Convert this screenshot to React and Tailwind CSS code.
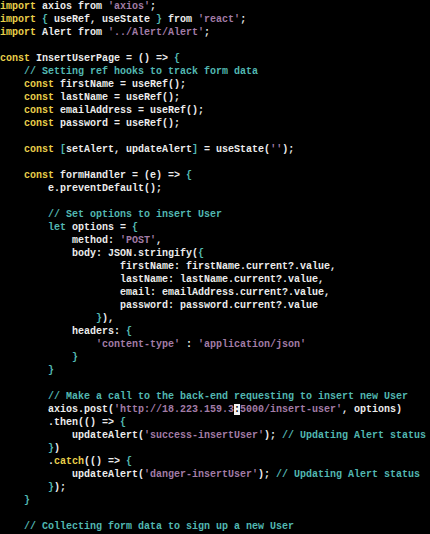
const Y = "text-[#e8cf4a]";
const T = "text-[#52b8b2]";
const S = "text-[#a27ca6]";
const W = "text-[#ececec]";

const lines = [
  [["import", Y], [" axios from ", W], ["'axios'", S], [";", W]],
  [["import", Y], [" ", W], ["{", T], [" useRef, useState ", W], ["}", T], [" from ", W], ["'react'", S], [";", W]],
  [["import", Y], [" Alert from ", W], ["'../Alert/Alert'", S], [";", W]],
  [],
  [["const", Y], [" InsertUserPage = () => ", W], ["{", T]],
  [["    // Setting ref hooks to track form data", T]],
  [["    ", W], ["const", Y], [" firstName = useRef();", W]],
  [["    ", W], ["const", Y], [" lastName = useRef();", W]],
  [["    ", W], ["const", Y], [" emailAddress = useRef();", W]],
  [["    ", W], ["const", Y], [" password = useRef();", W]],
  [],
  [["    ", W], ["const", Y], [" ", W], ["[", T], ["setAlert, updateAlert", W], ["]", T], [" = useState(", W], ["''", S], [");", W]],
  [],
  [["    ", W], ["const", Y], [" formHandler = (e) => ", W], ["{", T]],
  [["        e.preventDefault();", W]],
  [],
  [["        // Set options to insert User", T]],
  [["        ", W], ["let", T], [" options = ", W], ["{", T]],
  [["            method: ", W], ["'POST'", S], [",", W]],
  [["            body: JSON.stringify(", W], ["{", T]],
  [["                    firstName: firstName.current?.value,", W]],
  [["                    lastName: lastName.current?.value,", W]],
  [["                    email: emailAddress.current?.value,", W]],
  [["                    password: password.current?.value", W]],
  [["                ", W], ["}", T], ["),", W]],
  [["            headers: ", W], ["{", T]],
  [["                ", W], ["'content-type'", S], [" : ", W], ["'application/json'", S]],
  [["            ", W], ["}", T]],
  [["        ", W], ["}", T]],
  [],
  [["        // Make a call to the back-end requesting to insert new User", T]],
  [["        axios.post(", W], ["'http://18.223.159.3", S], [":", "CURSOR"], ["5000/insert-user'", S], [", options)", W]],
  [["        .then(() => ", W], ["{", T]],
  [["            updateAlert(", W], ["'success-insertUser'", S], [");", W], [" // Updating Alert status", T]],
  [["        ", W], ["}", T], [")", W]],
  [["        .", W], ["catch", Y], ["(() => ", W], ["{", T]],
  [["            updateAlert(", W], ["'danger-insertUser'", S], [");", W], [" // Updating Alert status", T]],
  [["        ", W], ["}", T], [");", W]],
  [["    ", W], ["}", T]],
  [],
  [["    // Collecting form data to sign up a new User", T]],
];

function CodeLine({ parts }) {
  return (
    <div className="h-[13px] leading-[13px] whitespace-pre">
      {parts.length === 0 && " "}
      {parts.map(([text, cls], i) =>
        cls === "CURSOR" ? (
          <span key={i} className="bg-[#f2f2f2] text-black">{text}</span>
        ) : (
          <span key={i} className={cls}>{text}</span>
        )
      )}
    </div>
  );
}

export default function App() {
  return (
    <div
      className="w-[430px] h-[534px] overflow-hidden bg-black text-[10px] font-bold"
      style={{ fontFamily: '"Liberation Mono", "Courier New", monospace' }}
    >
      {lines.map((parts, i) => (
        <CodeLine key={i} parts={parts} />
      ))}
    </div>
  );
}
